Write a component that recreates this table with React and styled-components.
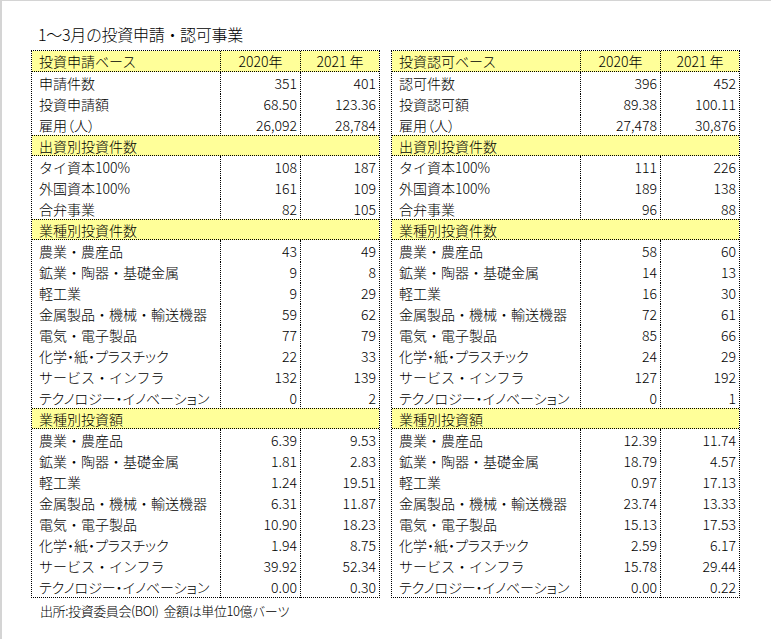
import styled, { createGlobalStyle } from "styled-components";

const GlobalStyle = createGlobalStyle`
  html, body {
    margin: 0;
    padding: 0;
    background: #ffffff;
  }
  body {
    font-family: "Noto Sans CJK JP", "Noto Sans", sans-serif;
    font-weight: 300;
    color: #000000;
  }
`;

// labels that the original font sets narrower (small kana, brackets)
const NARROW = new Set([
  "雇用（人）",
  "化学・紙・プラスチック",
  "テクノロジー・イノベーション",
]);

const left = {
  head: ["投資申請ベース", "2020年", "2021 年"],
  top: [
    ["申請件数", "351", "401"],
    ["投資申請額", "68.50", "123.36"],
    ["雇用（人）", "26,092", "28,784"],
  ],
  sections: [
    {
      title: "出資別投資件数",
      rows: [
        ["タイ資本100%", "108", "187"],
        ["外国資本100%", "161", "109"],
        ["合弁事業", "82", "105"],
      ],
    },
    {
      title: "業種別投資件数",
      rows: [
        ["農業・農産品", "43", "49"],
        ["鉱業・陶器・基礎金属", "9", "8"],
        ["軽工業", "9", "29"],
        ["金属製品・機械・輸送機器", "59", "62"],
        ["電気・電子製品", "77", "79"],
        ["化学・紙・プラスチック", "22", "33"],
        ["サービス・インフラ", "132", "139"],
        ["テクノロジー・イノベーション", "0", "2"],
      ],
    },
    {
      title: "業種別投資額",
      rows: [
        ["農業・農産品", "6.39", "9.53"],
        ["鉱業・陶器・基礎金属", "1.81", "2.83"],
        ["軽工業", "1.24", "19.51"],
        ["金属製品・機械・輸送機器", "6.31", "11.87"],
        ["電気・電子製品", "10.90", "18.23"],
        ["化学・紙・プラスチック", "1.94", "8.75"],
        ["サービス・インフラ", "39.92", "52.34"],
        ["テクノロジー・イノベーション", "0.00", "0.30"],
      ],
    },
  ],
};

const right = {
  head: ["投資認可ベース", "2020年", "2021 年"],
  top: [
    ["認可件数", "396", "452"],
    ["投資認可額", "89.38", "100.11"],
    ["雇用（人）", "27,478", "30,876"],
  ],
  sections: [
    {
      title: "出資別投資件数",
      rows: [
        ["タイ資本100%", "111", "226"],
        ["外国資本100%", "189", "138"],
        ["合弁事業", "96", "88"],
      ],
    },
    {
      title: "業種別投資件数",
      rows: [
        ["農業・農産品", "58", "60"],
        ["鉱業・陶器・基礎金属", "14", "13"],
        ["軽工業", "16", "30"],
        ["金属製品・機械・輸送機器", "72", "61"],
        ["電気・電子製品", "85", "66"],
        ["化学・紙・プラスチック", "24", "29"],
        ["サービス・インフラ", "127", "192"],
        ["テクノロジー・イノベーション", "0", "1"],
      ],
    },
    {
      title: "業種別投資額",
      rows: [
        ["農業・農産品", "12.39", "11.74"],
        ["鉱業・陶器・基礎金属", "18.79", "4.57"],
        ["軽工業", "0.97", "17.13"],
        ["金属製品・機械・輸送機器", "23.74", "13.33"],
        ["電気・電子製品", "15.13", "17.53"],
        ["化学・紙・プラスチック", "2.59", "6.17"],
        ["サービス・インフラ", "15.78", "29.44"],
        ["テクノロジー・イノベーション", "0.00", "0.22"],
      ],
    },
  ],
};

function DataRow({ row }) {
  return (
    <Row>
      <Label $narrow={NARROW.has(row[0])}>{row[0]}</Label>
      <Num>{row[1]}</Num>
      <Num>{row[2]}</Num>
    </Row>
  );
}

function StatTable({ data }) {
  return (
    <Table>
      <HeadRow>
        <Label>{data.head[0]}</Label>
        <Year>{data.head[1]}</Year>
        <Year>{data.head[2]}</Year>
      </HeadRow>
      {data.top.map((r) => (
        <DataRow key={r[0]} row={r} />
      ))}
      {data.sections.map((s) => (
        <div key={s.title}>
          <SectionRow>{s.title}</SectionRow>
          {s.rows.map((r) => (
            <DataRow key={r[0]} row={r} />
          ))}
        </div>
      ))}
    </Table>
  );
}

export default function App() {
  return (
    <>
      <GlobalStyle />
      <Page>
        <Title>1〜3月の投資申請・認可事業</Title>
        <Tables>
          <StatTable data={left} />
          <StatTable data={right} />
        </Tables>
        <Note>出所:投資委員会(BOI)&nbsp;&nbsp;金額は単位10億バーツ</Note>
      </Page>
    </>
  );
}

const Page = styled.div`
  box-sizing: border-box;
  width: 771px;
  height: 639px;
  border-top: 1px solid #d4d4d4;
  border-left: 2px solid #d4d4d4;
  padding: 0 0 0 29px;
`;

const Title = styled.div`
  box-sizing: border-box;
  height: 49px;
  padding: 23px 0 0 7px;
  font-size: 16px;
  line-height: 20px;
  letter-spacing: -0.3px;
`;

const Tables = styled.div`
  display: flex;
  gap: 11px;
  align-items: flex-start;
`;

const Table = styled.div`
  box-sizing: border-box;
  width: 349px;
  border: 1px dotted #000000;
  font-size: 14px;
`;

const Row = styled.div`
  box-sizing: border-box;
  display: grid;
  grid-template-columns: 188px 80px 1fr;
  height: 21px;
  line-height: 22px;
  white-space: nowrap;
`;

const HeadRow = styled(Row)`
  background: #ffff99;
  border-bottom: 1px dotted #000000;
  line-height: 21px;
`;

const SectionRow = styled.div`
  box-sizing: border-box;
  height: 21px;
  line-height: 20px;
  padding-left: 7px;
  background: #ffff99;
  border-top: 1px dotted #000000;
  border-bottom: 1px dotted #000000;
  white-space: nowrap;
`;

const Label = styled.div`
  padding-left: 7px;
  overflow: hidden;
  font-feature-settings: ${(p) => (p.$narrow ? '"palt"' : "normal")};
`;

const Num = styled.div`
  border-left: 1px dotted #000000;
  padding-right: 3px;
  text-align: right;
`;

const Year = styled.div`
  border-left: 1px dotted #000000;
  text-align: center;
`;

const Note = styled.div`
  padding: 3px 0 0 9px;
  font-size: 13px;
  line-height: 20px;
  letter-spacing: -0.4px;
`;
